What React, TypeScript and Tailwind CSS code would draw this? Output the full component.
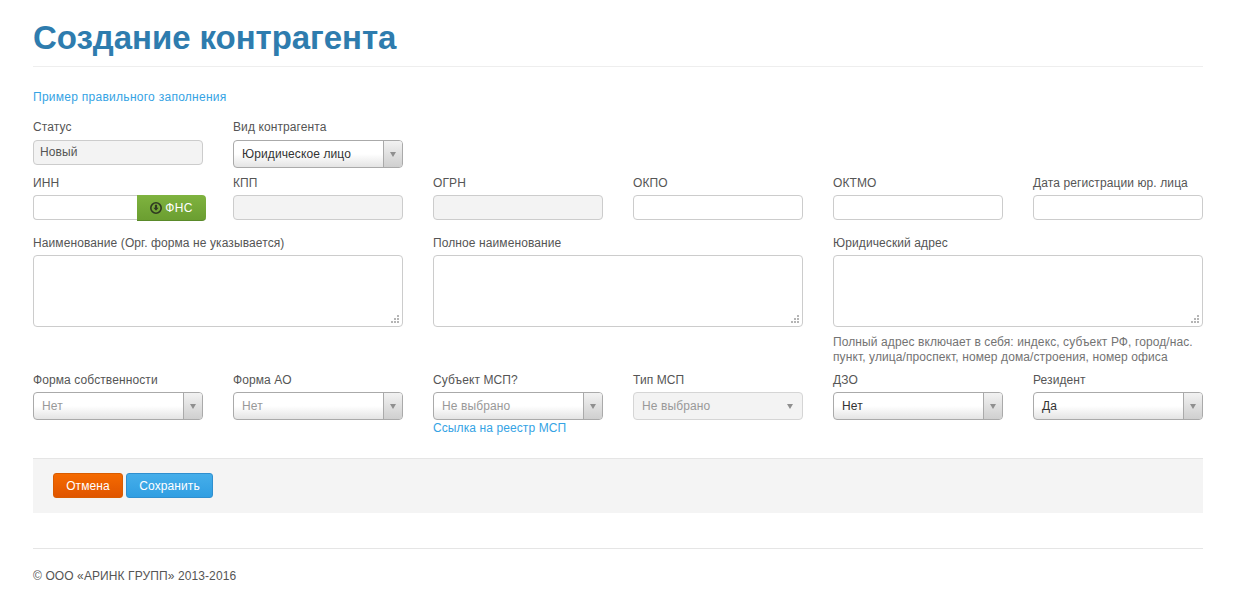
import type { ReactElement, ReactNode } from "react";

function Label({ children }: { children: ReactNode }): ReactElement {
  return <label className="block h-5 text-xs leading-5 text-[#555555] whitespace-nowrap">{children}</label>;
}

function Input({ disabled }: { disabled?: boolean }): ReactElement {
  return (
    <div
      className={`h-[25px] rounded border border-[#cccccc] ${disabled ? "bg-[#f3f3f3]" : "bg-white"}`}
    />
  );
}

function Select({ value, muted }: { value: string; muted?: boolean }): ReactElement {
  return (
    <div className="flex h-[28px] rounded border border-[#aaaaaa] bg-gradient-to-b from-white from-50% to-[#e4e4e4] overflow-hidden">
      <span className={`flex-1 pl-2 text-xs leading-[26px] whitespace-nowrap ${muted ? "text-[#999999]" : "text-[#333333]"}`}>
        {value}
      </span>
      <span className="flex w-[19px] items-center justify-center border-l border-[#aaaaaa] bg-gradient-to-b from-[#f2f2f2] to-[#cfcfcf]">
        <Caret />
      </span>
    </div>
  );
}

function Caret(): ReactElement {
  return (
    <svg width="6" height="5" viewBox="0 0 6 5">
      <path d="M0 0h6L3 5z" fill="#8f8f8f" />
    </svg>
  );
}

function Textarea(): ReactElement {
  return (
    <div className="relative h-[72px] rounded border border-[#cccccc] bg-white">
      <svg className="absolute right-[2px] bottom-[2px]" width="9" height="9" viewBox="0 0 9 9" fill="#b5b5b5">
        <rect x="6" y="0" width="2" height="2" />
        <rect x="3" y="3" width="2" height="2" />
        <rect x="6" y="3" width="2" height="2" />
        <rect x="0" y="6" width="2" height="2" />
        <rect x="3" y="6" width="2" height="2" />
        <rect x="6" y="6" width="2" height="2" />
      </svg>
    </div>
  );
}

export default function App(): ReactElement {
  return (
    <div className="w-[1170px] ml-[33px] font-['Liberation_Sans',Arial,sans-serif] text-xs tracking-[0.1px] text-[#555555]">
      <div className="h-[67px] border-b border-[#eeeeee] pt-[16px]">
        <h1 className="text-[33px] leading-[43px] font-bold tracking-[-0.05px] text-[#2e7cae]">Создание контрагента</h1>
      </div>

      <a className="mt-[21px] block h-[18px] text-xs leading-[18px] tracking-[0.27px] text-[#35a3e4]">Пример правильного заполнения</a>

      <div className="mt-[11px] grid grid-cols-6 gap-x-[30px]">
        <div>
          <Label>Статус</Label>
          <div className="mt-[3px] h-[25px] rounded border border-[#cccccc] bg-[#f3f3f3] pl-[6px] text-xs leading-[22px] text-[#555555]">
            Новый
          </div>
        </div>
        <div>
          <Label>Вид контрагента</Label>
          <div className="mt-[3px]">
            <Select value="Юридическое лицо" />
          </div>
        </div>
      </div>

      <div className="mt-[5px] grid grid-cols-6 gap-x-[30px]">
        <div>
          <Label>ИНН</Label>
          <div className="mt-[2px] flex w-[173px]">
            <div className="h-[25px] w-[104px] rounded-l border border-r-0 border-[#cccccc] bg-white" />
            <button
              type="button"
              className="flex h-[26px] w-[69px] items-center justify-center gap-[2px] rounded-r border-b border-[#5a8a2a] bg-gradient-to-b from-[#7fb33f] to-[#6b9e31] pr-[1px] text-xs tracking-[0.4px] text-white"
            >
              <svg width="14" height="14" viewBox="0 0 14 14">
                <circle cx="7" cy="7" r="5.2" fill="none" stroke="#2f3a22" strokeWidth="1.6" />
                <path d="M5.9 3.8h2.2v3h1.5L7 9.8 4.4 6.8h1.5z" fill="#2f3a22" />
              </svg>
              ФНС
            </button>
          </div>
        </div>
        <div>
          <Label>КПП</Label>
          <div className="mt-[2px]">
            <Input disabled />
          </div>
        </div>
        <div>
          <Label>ОГРН</Label>
          <div className="mt-[2px]">
            <Input disabled />
          </div>
        </div>
        <div>
          <Label>ОКПО</Label>
          <div className="mt-[2px]">
            <Input />
          </div>
        </div>
        <div>
          <Label>ОКТМО</Label>
          <div className="mt-[2px]">
            <Input />
          </div>
        </div>
        <div>
          <Label>Дата регистрации юр. лица</Label>
          <div className="mt-[2px]">
            <Input />
          </div>
        </div>
      </div>

      <div className="mt-[12px] grid grid-cols-6 gap-x-[30px]">
        <div className="col-span-2">
          <Label>Наименование (Орг. форма не указывается)</Label>
          <div className="mt-[2px]">
            <Textarea />
          </div>
        </div>
        <div className="col-span-2">
          <Label>Полное наименование</Label>
          <div className="mt-[2px]">
            <Textarea />
          </div>
        </div>
        <div className="col-span-2">
          <Label>Юридический адрес</Label>
          <div className="mt-[2px]">
            <Textarea />
          </div>
          <p className="mt-[8px] text-xs leading-[15px] text-[#737373]">
            Полный адрес включает в себя: индекс, субъект РФ, город/нас. пункт, улица/проспект, номер дома/строения, номер офиса
          </p>
        </div>
      </div>

      <div className="mt-[5px] grid grid-cols-6 gap-x-[30px]">
        <div>
          <Label>Форма собственности</Label>
          <div className="mt-[2px]">
            <Select value="Нет" muted />
          </div>
        </div>
        <div>
          <Label>Форма АО</Label>
          <div className="mt-[2px]">
            <Select value="Нет" muted />
          </div>
        </div>
        <div>
          <Label>Субъект МСП?</Label>
          <div className="mt-[2px]">
            <Select value="Не выбрано" muted />
          </div>
          <a className="mt-[1px] block h-[15px] text-xs leading-[15px] text-[#35a3e4]">Ссылка на реестр МСП</a>
        </div>
        <div>
          <Label>Тип МСП</Label>
          <div className="mt-[2px] flex h-[28px] items-center rounded border border-[#d5d5d5] bg-[#f3f3f3] pl-2 pr-[9px]">
            <span className="flex-1 text-xs text-[#999999]">Не выбрано</span>
            <Caret />
          </div>
        </div>
        <div>
          <Label>ДЗО</Label>
          <div className="mt-[2px]">
            <Select value="Нет" />
          </div>
        </div>
        <div>
          <Label>Резидент</Label>
          <div className="mt-[2px]">
            <Select value="Да" />
          </div>
        </div>
      </div>

      <div className="mt-[22px] flex h-[55px] items-center gap-[3px] border-t border-[#e5e5e5] bg-[#f4f4f4] pb-[2px] pl-[20px]">
        <button
          type="button"
          className="h-[25px] w-[70px] rounded-[3px] border border-[#d95c00] bg-gradient-to-b from-[#f56a00] to-[#e05500] pt-[1px] text-xs text-white"
        >
          Отмена
        </button>
        <button
          type="button"
          className="h-[25px] w-[87px] rounded-[3px] border border-[#2f8fcf] bg-gradient-to-b from-[#45aeea] to-[#2f9ee2] pt-[1px] text-xs text-white"
        >
          Сохранить
        </button>
      </div>

      <div className="mt-[35px] border-t border-[#e5e5e5] pt-[18px] text-xs leading-[18px] text-[#555555]">
        © ООО «АРИНК ГРУПП» 2013-2016
      </div>
    </div>
  );
}
